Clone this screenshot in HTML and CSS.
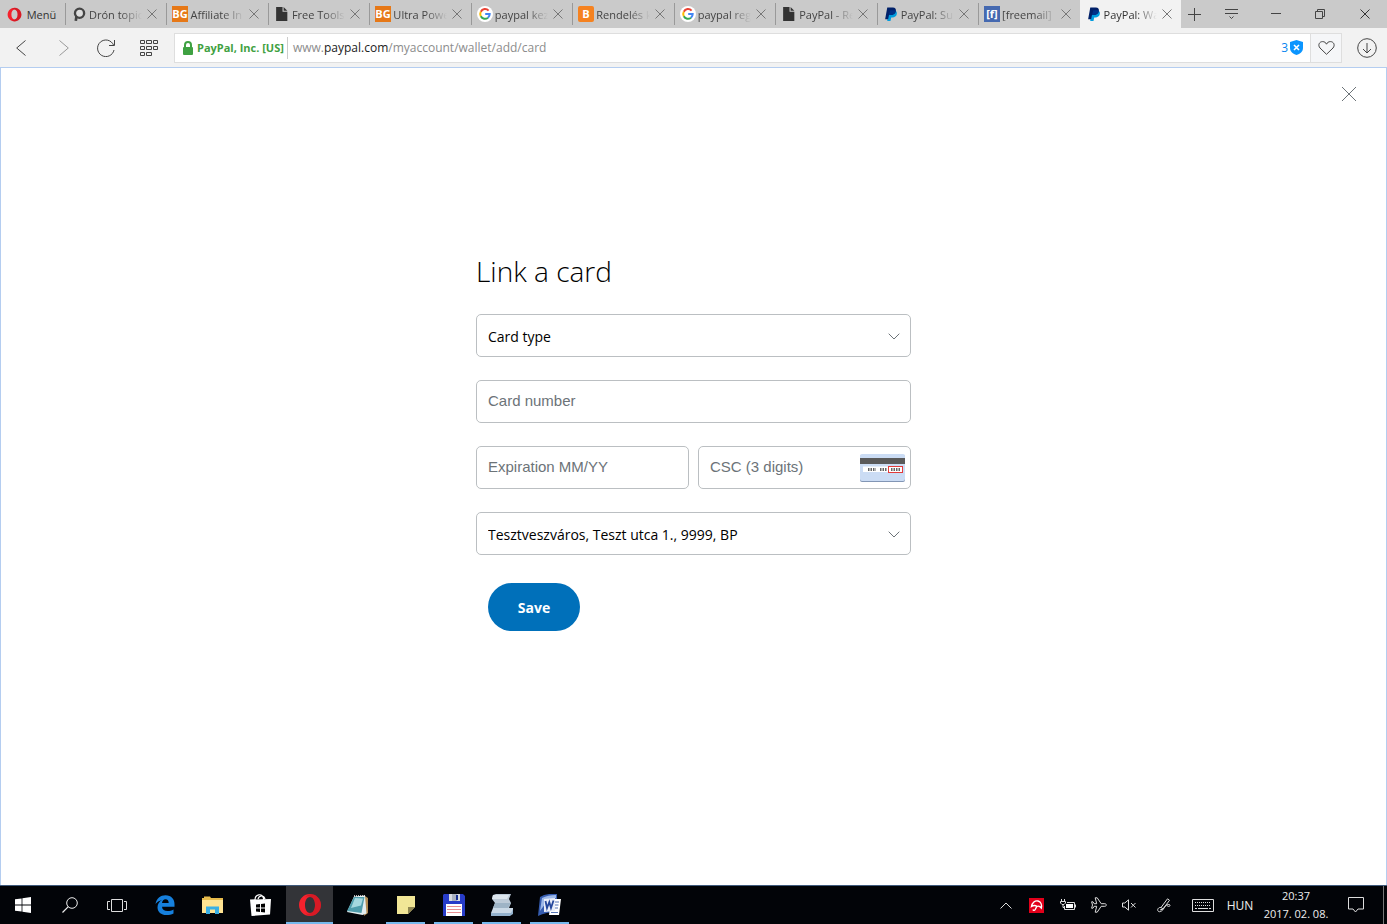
FILE: index.html
```html
<!DOCTYPE html>
<html lang="en">
<head>
  <meta charset="UTF-8">
  <meta name="viewport" content="width=device-width, initial-scale=1.0">
  <title>PayPal: Wallet</title>
  <link rel="stylesheet" href="styles.css">
</head>
<body>
  <!-- shared icons -->
  <svg class="sprite" aria-hidden="true">
    <symbol id="x" viewBox="0 0 10 10"><path d="M.5.5l9 9M9.500.5l-9 9" fill="none" stroke="currentColor"/></symbol>
    <symbol id="doc" viewBox="0 0 15 15"><path d="M2 1h6v4.500h4.500V14H2z" fill="#333"/><path d="M9 1l3.500 3.500H9z" fill="#333"/></symbol>
    <symbol id="google" viewBox="0 0 16 16"><circle cx="8" cy="8" r="8" fill="#fff"/><g fill="none" stroke-width="2"><path d="M11.600 4.600A4.800 4.800 0 0 0 3.800 5.700" stroke="#ea4335"/><path d="M3.800 5.700a4.800 4.800 0 0 0 0 4.600" stroke="#fbbc05"/><path d="M3.800 10.300a4.800 4.800 0 0 0 7.200 1.400" stroke="#34a853"/><path d="M11 11.700A4.800 4.800 0 0 0 12.700 8H8.200" stroke="#4285f4"/></g></symbol>
    <symbol id="paypal" viewBox="0 0 15 15"><path d="M5 4h6c2 .6 2.300 2.200 1.900 3.800-.5 2-2 2.900-4.100 2.900H7.700L7 14H4z" fill="#009cde"/><path d="M4 1.500h5.300c2.100 0 3.100 1.300 2.700 3.300C11.500 7.600 9.700 8.500 7.300 8.500H5.600L4.800 12.500H2z" fill="#012169"/><path d="M5.500 8.500h1.800c2.400 0 4.200-.9 4.700-3.700l.1-.5c-1-.5-3.500-.4-5.300-.4z" fill="#003087"/></symbol>
    <symbol id="opera" viewBox="0 0 24 24"><path fill-rule="evenodd" d="M12 1C5.900 1 1 5.900 1 12s4.900 11 11 11 11-4.900 11-11S18.100 1 12 1zm0 3c2.900 0 5 3.500 5 8s-2.100 8-5 8-5-3.500-5-8 2.100-8 5-8z" fill="#f5222d"/><path d="M15.500 1.600C20 3 23 7.200 23 12s-3 9-7.500 10.400C11.500 23.500 8.500 22 7 19.500c1.500 1.300 3.300 2 5 .5 2.900 0 5-3.500 5-8s-2.100-8-5-8c-1.700-1.500-3.500-.8-5 .5C8.500 2 11.500.5 15.500 1.600z" fill="#a90f19" opacity=".4"/></symbol>
  </svg>

  <header class="browser">
    <div class="tabbar">
      <button class="menu"><svg width="15" height="15"><use href="#opera"/></svg>Menü</button>
      <div class="tabs">
        <div class="tab"><svg class="fav" viewBox="0 0 15 15"><path d="M4.500 14l.6-4.500" stroke="#444" stroke-width="2.500"/><circle cx="8" cy="6.800" r="4.300" fill="#ddd" stroke="#444" stroke-width="2.200"/></svg><span class="title">Drón topic</span><button class="close" aria-label="Close tab"><svg><use href="#x"/></svg></button></div>
        <div class="tab"><svg class="fav" viewBox="0 0 16 16"><rect width="16" height="16" fill="#e67817"/><text class="fav-text" x="8" y="12">BG</text></svg><span class="title">Affiliate In</span><button class="close" aria-label="Close tab"><svg><use href="#x"/></svg></button></div>
        <div class="tab"><svg class="fav"><use href="#doc"/></svg><span class="title">Free Tools</span><button class="close" aria-label="Close tab"><svg><use href="#x"/></svg></button></div>
        <div class="tab"><svg class="fav" viewBox="0 0 16 16"><rect width="16" height="16" fill="#e67817"/><text class="fav-text" x="8" y="12">BG</text></svg><span class="title">Ultra Powe</span><button class="close" aria-label="Close tab"><svg><use href="#x"/></svg></button></div>
        <div class="tab"><svg class="fav"><use href="#google"/></svg><span class="title">paypal kez</span><button class="close" aria-label="Close tab"><svg><use href="#x"/></svg></button></div>
        <div class="tab"><svg class="fav" viewBox="0 0 16 16"><rect width="16" height="16" rx="2" fill="#f58220"/><text class="fav-text" x="8" y="12">B</text></svg><span class="title">Rendelés k</span><button class="close" aria-label="Close tab"><svg><use href="#x"/></svg></button></div>
        <div class="tab"><svg class="fav"><use href="#google"/></svg><span class="title">paypal reg</span><button class="close" aria-label="Close tab"><svg><use href="#x"/></svg></button></div>
        <div class="tab"><svg class="fav"><use href="#doc"/></svg><span class="title">PayPal - Re</span><button class="close" aria-label="Close tab"><svg><use href="#x"/></svg></button></div>
        <div class="tab"><svg class="fav"><use href="#paypal"/></svg><span class="title">PayPal: Su</span><button class="close" aria-label="Close tab"><svg><use href="#x"/></svg></button></div>
        <div class="tab"><svg class="fav" viewBox="0 0 16 16"><rect width="16" height="16" fill="#4569b0"/><text class="fav-text" x="8" y="12">[f]</text></svg><span class="title">[freemail]</span><button class="close" aria-label="Close tab"><svg><use href="#x"/></svg></button></div>
        <div class="tab active"><svg class="fav"><use href="#paypal"/></svg><span class="title">PayPal: Wa</span><button class="close" aria-label="Close tab"><svg><use href="#x"/></svg></button></div>
      </div>
      <div class="window-buttons">
        <button class="small" aria-label="New tab"><svg width="13" height="13" viewBox="0 0 13 13"><path d="M0 6.500h13M6.500 0v13"/></svg></button>
        <button aria-label="Tab menu"><svg width="13" height="12" viewBox="0 0 13 12"><path d="M0 1.500h13M0 5.500h13M4.500 8.500l2 2 2-2"/></svg></button>
        <button aria-label="Minimize"><svg width="10" height="10" viewBox="0 0 10 10"><path d="M0 4.500h10"/></svg></button>
        <button aria-label="Restore"><svg width="10" height="10" viewBox="0 0 10 10"><path d="M.5 2.500h7v7h-7zM2.500 2.500v-2h7v7h-2"/></svg></button>
        <button aria-label="Close"><svg width="10" height="10"><use href="#x"/></svg></button>
      </div>
    </div>

    <div class="toolbar">
      <nav class="nav">
        <button aria-label="Back"><svg width="10" height="16" viewBox="0 0 10 16"><path d="M9.500.5L.7 8l8.800 7.500"/></svg></button>
        <button class="off" aria-label="Forward"><svg width="10" height="16" viewBox="0 0 10 16"><path d="M.5.5L9.300 8 .5 15.500"/></svg></button>
        <button aria-label="Reload"><svg width="18" height="18" viewBox="0 0 18 18"><path d="M17 11a8.300 8.300 0 1 1-.5-5M17.500 1v5.500H12"/></svg></button>
        <button aria-label="Speed dial"><svg width="18" height="16" viewBox="0 0 18 16"><path d="M.5.5h4v3h-4zM6.500.5h5v3h-5zM13.500.5h4v3h-4zM.5 6.500h4v3h-4zM6.500 6.500h5v3h-5zM13.500 6.500h4v3h-4zM.5 12.500h4v3h-4zM6.500 12.500h5v3h-5z"/></svg></button>
      </nav>
      <div class="address">
        <svg class="lock" width="10" height="14" viewBox="0 0 10 14"><rect y="6" width="10" height="8" rx="1" fill="#3fa142"/><path d="M2 7V4a3 3 0 0 1 6 0v3" fill="none" stroke="#3fa142" stroke-width="2"/></svg>
        <span class="owner">PayPal, Inc. [US]</span>
        <div class="url" role="textbox" contenteditable="true" spellcheck="false" aria-label="Address">www.<b>paypal.com</b>/myaccount/wallet/add/card</div>
        <button class="blocked">3<svg width="13" height="15" viewBox="0 0 13 15"><path d="M6.500 0L13 2v6c0 3.500-3 6-6.500 7C3 14 0 11.500 0 8V2z" fill="#0a95ff"/><path d="M4 5l5 5M9 5l-5 5" stroke="#fff" stroke-width="1.600"/></svg></button>
        <button class="heart" aria-label="Bookmark"><svg width="17" height="14" viewBox="0 0 17 14"><path d="M8.500 13.300L2 7C-.5 4 1.500.6 4.500.6c2 0 3.300 1 4 2.600.7-1.600 2-2.600 4-2.600 3 0 5 3.400 2.500 6.400z"/></svg></button>
      </div>
      <button class="download" aria-label="Downloads"><svg width="20" height="20" viewBox="0 0 20 20"><circle cx="10" cy="10" r="9.300"/><path d="M10 5v10M6 11l4 4 4-4"/></svg></button>
    </div>
  </header>

  <main class="page">
    <div class="page-top">
      <button class="page-close" aria-label="Close"><svg width="16" height="16" viewBox="0 0 16 16"><path d="M1 1l14 14M15 1L1 15" fill="none" stroke="#6c7378"/></svg></button>
    </div>
    <form class="card-form">
      <h1>Link a card</h1>
      <div class="field">
        <select aria-label="Card type"><option>Card type</option></select>
        <svg class="arrow" width="12" height="7" viewBox="0 0 12 7"><path d="M.7.7L6 6 11.300.7"/></svg>
      </div>
      <div class="field"><input type="text" placeholder="Card number" aria-label="Card number"></div>
      <div class="row">
        <div class="field"><input type="text" placeholder="Expiration MM/YY" aria-label="Expiration MM/YY"></div>
        <div class="field">
          <input type="text" placeholder="CSC (3 digits)" aria-label="CSC (3 digits)">
          <svg class="csc" width="45" height="28" viewBox="0 0 45 28"><rect y="1" width="45" height="27" rx="2" fill="#8296b5"/><rect width="45" height="27" rx="2" fill="#cbdcf4"/><path d="M0 4h45v6H0z" fill="#5a5a5a"/><path d="M3 12.500h26v5.500H3z" fill="#fff"/><rect x="28.500" y="12.500" width="14" height="6" fill="#fff" stroke="#e33b3b"/><path d="M8 15.500h8M20 15.500h7M31 15.500h9" stroke="#666" stroke-width="3" stroke-dasharray="1.500 1"/></svg>
        </div>
      </div>
      <div class="field">
        <select aria-label="Billing address"><option>Tesztveszváros, Teszt utca 1., 9999, BP</option></select>
        <svg class="arrow" width="12" height="7" viewBox="0 0 12 7"><path d="M.7.7L6 6 11.300.7"/></svg>
      </div>
      <button type="button" class="save">Save</button>
    </form>
  </main>

  <footer class="taskbar">
    <div class="apps">
      <button class="sys" aria-label="Start"><svg width="16" height="16" viewBox="0 0 16 16"><path d="M0 2.300L6.600 1.400v6.200H0zM7.400 1.300L16 0v7.600H7.400zM0 8.400h6.600v6.200L0 13.700zM7.400 8.400H16V16l-8.600-1.300z" fill="#fff"/></svg></button>
      <button class="sys" aria-label="Search"><svg width="16" height="16" viewBox="0 0 16 16"><circle cx="10" cy="6" r="5.300" fill="none" stroke="#eee"/><path d="M6.300 9.700L.5 15.500" stroke="#eee" stroke-width="1.200"/></svg></button>
      <button class="sys" aria-label="Task view"><svg width="20" height="13" viewBox="0 0 20 13"><path d="M4.500.5h11v12h-11zM3 2.500H.5v8H3M17 2.500h2.500v8H17" fill="none" stroke="#ddd"/></svg></button>
      <button aria-label="Edge"><svg width="20" height="20" viewBox="0 0 20 20"><path d="M.5 9C1.500 3.200 5.500.3 10.500.3c6 0 9 4.200 9 9v2.400H7c.2 3 2.500 4.300 5.500 4.300 2.300 0 4.300-.6 6-1.600v4c-2 1.100-4.500 1.600-7 1.600-5.500 0-9-3-9-7.800 0-3.400 1.800-5.800 4.500-7C4 5.800 2 7 .5 9zM7 8h6.700c0-2.300-1-3.700-3.200-3.700C8.600 4.300 7.300 5.800 7 8z" fill="#1680dd"/></svg></button>
      <button aria-label="File Explorer"><svg width="21" height="18" viewBox="0 0 21 18"><path d="M0 2h2V.5h6L9 2h12v15H0z" fill="#e8bc4c"/><path d="M0 4h21v13H0z" fill="#ffe493"/><path d="M4 18v-7.500h13V18h-4v-4.500H8V18z" fill="#3bb0e5"/></svg></button>
      <button aria-label="Store"><svg width="21" height="22" viewBox="0 0 21 22"><path d="M5 6c0-6 7-7 8.500-2V6M8 5c1-4 6-4 7 0" fill="none" stroke="#fff" stroke-width="1.200"/><path d="M0 5.500l21-.5-1 15.500L1.500 22z" fill="#fff"/><path d="M6 10.500l4-.5v3.500H6zM11 10l4-.5v4h-4zM6 14.500h4V18l-4-.5zM11 14.500h4v4l-4-.5z" fill="#000"/></svg></button>
      <button class="running current" aria-label="Opera"><svg width="24" height="24"><use href="#opera"/></svg></button>
      <button aria-label="Notepad"><svg width="22" height="22" viewBox="0 0 22 22"><path d="M18 2l3 2v15l-4 3z" fill="#b28b51"/><path d="M7 2.500L18 1.500l1.500 18-4 1.500L0 18z" fill="#e3eef0"/><path d="M7 3l10.500 0L14.500 19 0 17z" fill="#4f9dac"/><path d="M8 4l8 .5-2 7L4 14z" fill="#a5d8df"/><path d="M7 2h11" stroke="#eee" stroke-width="1.500" stroke-dasharray="1 1"/></svg></button>
      <button class="running" aria-label="Sticky Notes"><svg width="18" height="18" viewBox="0 0 18 18"><path d="M0 0h18v11l-7 7H0z" fill="#f1e696"/><path d="M11 18v-7h7z" fill="#8f8650"/></svg></button>
      <button class="running" aria-label="Total Commander"><svg width="22" height="22" viewBox="0 0 22 22"><path d="M1 0h19l2 2v20H0V1z" fill="#273cc8"/><path d="M6 0h11v7H6z" fill="#d6dae1"/><path d="M9 0h5v7H9z" fill="#aab0bf"/><path d="M13 1h2v5h-2z" fill="#173092"/><path d="M3 10h16v12H3z" fill="#fff"/><path d="M4 12.500h14M4 15.500h14M4 18.500h14" stroke="#e88e91"/></svg></button>
      <button class="running" aria-label="Documents"><svg width="24" height="22" viewBox="0 0 24 22"><path d="M3 1l3-1h15l-2 5 2 4-2 5H3l2-5-3-4z" fill="#bccad7"/><path d="M3 1h16l-2 4H2z" fill="#dce6ee"/><path d="M5 9l-2 5h15l3-5z" fill="#9eb4c6"/><path d="M3 14h20v6H9v2H1v-3z" fill="#cad9e6"/><path d="M1 19h20l2-4v5l-3 2H1z" fill="#93b1cc"/></svg></button>
      <button class="running" aria-label="Word"><svg width="23" height="22" viewBox="0 0 23 22"><path d="M2 3q6-4 17-3v18Q8 18 0 22z" fill="#365db0"/><path d="M4 4q6-3 14-3v3Q9 6 2 17z" fill="#9eb9e8"/><path d="M13 5h10l-2 16H11z" fill="#fff"/><path d="M6 5l11-1v13L6 18z" fill="#e9eef9"/><path d="M7.500 7l1.500 7 2.300-6 1.700 6 2.500-7.500" fill="none" stroke="#25489c" stroke-width="1.800"/><path d="M17 8h4M17 11h3.500M17 14h3M13 18.500h7" stroke="#5575b6"/></svg></button>
    </div>
    <div class="tray">
      <button aria-label="Show hidden icons"><svg width="12" height="7" viewBox="0 0 12 7"><path d="M.5 6.500L6 1l5.500 5.500" fill="none" stroke="#ddd"/></svg></button>
      <button aria-label="Avira"><svg width="15" height="15" viewBox="0 0 15 15"><rect width="15" height="15" fill="#e2001a"/><path d="M2.500 8.500C3.200 4.500 6 2.300 9 3c2.800.7 4 3.800 3.300 7-1.300-1.700-2.800-2.300-4.300-1.500-1.500-1.300-3.500-1.300-5.500 0z" fill="none" stroke="#fff" stroke-width="1.400"/><path d="M7.800 8.500L6.200 11.500c-.7 1.200-2 1-2.200 0" fill="none" stroke="#fff" stroke-width="1.400"/></svg></button>
      <button aria-label="Battery"><svg width="16" height="12" viewBox="0 0 16 12"><path d="M1.500 0v2M4.500 0v2M.5 2.500h5v1.500l-1.500 1.500h-2L.5 4zM3 5.500v3h2" fill="none" stroke="#ddd"/><path d="M7 3.500h7.500v7h-10V7" fill="none" stroke="#ddd"/><path d="M6 5h7v4H6z" fill="#fff"/><path d="M15.500 5.500v3" stroke="#ddd"/></svg></button>
      <button aria-label="Airplane mode"><svg width="16" height="16" viewBox="0 0 16 16"><path d="M5.700 6.700L4.200.8h2l4 5.900h3.600c2 0 2 2.600 0 2.600h-3.600l-4 5.900h-2l1.500-5.900H3.200L2 11.200H.6L1.500 8 .6 4.800H2l1.200 1.900z" fill="none" stroke="#ddd"/></svg></button>
      <button aria-label="Volume"><svg width="15" height="12" viewBox="0 0 15 12"><path d="M.5 4h2.300L6.500.8v10.400L2.800 8H.5zM9 4l4.500 4.500M13.500 4L9 8.500" fill="none" stroke="#ddd"/></svg></button>
      <button class="ink" aria-label="Windows Ink"><svg width="14" height="15" viewBox="0 0 14 15"><path d="M4 9.500L10.500.8l2 1.500L6 11zM4 9.500c-2.500-.5-4 2-3 3.500 1.500 2 5-.5 6-3 1-2.700 5-4.500 6-3 .5 1.500-2 2-3 .5M3 12l3-1" fill="none" stroke="#ddd"/></svg></button>
      <button class="keyboard" aria-label="Touch keyboard"><svg width="22" height="13" viewBox="0 0 22 13"><path d="M.5.5h21v12H.5z" fill="none" stroke="#ddd"/><path d="M3 3.500h16M3 6.500h16" stroke="#ddd" stroke-dasharray="1 1"/><path d="M3 9.500h2M6 9.500h10M17 9.500h2" stroke="#ddd"/></svg></button>
      <button class="lang">HUN</button>
      <button class="clock"><span>20:37</span><span>2017. 02. 08.</span></button>
      <button class="notes" aria-label="Notifications"><svg width="16" height="16" viewBox="0 0 16 16"><path d="M.5.5h15v11.500h-5.500l-2.500 3-2.500-3H.5z" fill="none" stroke="#ddd"/></svg></button>
      <button class="desktop" aria-label="Show desktop"></button>
    </div>
  </footer>
</body>
</html>
```
FILE: styles.css
```css
* {
  margin: 0;
  padding: 0;
  box-sizing: border-box;
}

body {
  font-family: "Open Sans", "Noto Sans", sans-serif;
  font-size: 12px;
  min-height: 100vh;
  display: flex;
  flex-direction: column;
  background: #fff;
}

button {
  font: inherit;
  color: inherit;
  border: none;
  background: none;
  display: flex;
  align-items: center;
  justify-content: center;
  cursor: pointer;
}

svg {
  display: block;
  flex-shrink: 0;
}

.sprite {
  position: absolute;
  width: 0;
  height: 0;
}

/* browser */
.tabbar {
  display: flex;
  height: 28px;
  background: #cacaca;
  font-size: 11px;
  color: #444;
}

.menu {
  width: 65px;
  gap: 5px;
  padding-right: 2px;
  color: #333;
}

.tabs {
  flex: 1;
  display: flex;
  min-width: 0;
}

.tab {
  flex: 1;
  min-width: 0;
  display: flex;
  align-items: center;
  padding: 0 4px 0 6px;
  background: linear-gradient(#999, #999) no-repeat 0 3px / 1px 22px;
}

.tab.active {
  background: #f2f2f2;
  color: #333;
}

.fav {
  width: 16px;
  height: 16px;
  margin-right: 2px;
}

.fav-text {
  font-size: 11px;
  font-weight: 700;
  text-anchor: middle;
  fill: #fff;
}

.title {
  flex: 1;
  overflow: hidden;
  white-space: nowrap;
  -webkit-mask-image: linear-gradient(to right, #000 60%, transparent);
  mask-image: linear-gradient(to right, #000 60%, transparent);
}

.close {
  width: 20px;
  height: 20px;
  color: #777;
}

.close svg {
  width: 10px;
  height: 10px;
}

.window-buttons {
  display: flex;
  width: 206px;
  color: #333;
}

.window-buttons button {
  width: 45px;
}

.window-buttons .small {
  width: 28px;
}

.window-buttons svg,
.nav svg,
.heart svg,
.download svg {
  fill: none;
  stroke: #444;
}

.toolbar {
  display: flex;
  align-items: center;
  height: 39px;
  background: #f2f2f2;
}

.nav {
  display: flex;
  width: 174px;
  padding-right: 4px;
}

.nav button {
  flex: 1;
  height: 30px;
}

.nav .off svg {
  stroke: #999;
}

.address {
  flex: 1;
  display: flex;
  align-items: center;
  height: 30px;
  padding-left: 8px;
  background: #fff;
  border: 1px solid #dedede;
}

.owner {
  margin-left: 4px;
  padding-right: 3px;
  border-right: 1px solid #ccc;
  line-height: 22px;
  font-size: 11px;
  font-weight: 700;
  color: #3fa142;
}

.url {
  flex: 1;
  padding-left: 5px;
  color: #8c8c8c;
  outline: none;
}

.url b {
  font-weight: 400;
  color: #222;
}

.blocked {
  gap: 2px;
  margin-right: 7px;
  color: #0a85ef;
}

.heart {
  width: 31px;
  height: 28px;
  background: #f5f6f8;
  border-left: 1px solid #dedede;
}

.download {
  width: 45px;
  height: 30px;
  padding-left: 4px;
}

/* page */
.page {
  flex: 1;
  border: 1px solid #b4cdf0;
  border-bottom: none;
  padding-bottom: 40px;
}

.page-top {
  display: flex;
  justify-content: flex-end;
  padding: 12px 23px;
}

.page-close {
  width: 28px;
  height: 28px;
}

.card-form {
  width: 100%;
  max-width: 435px;
  margin: 0 auto;
  padding-top: 131px;
}

.card-form h1 {
  font-size: 28px;
  line-height: 40px;
  font-weight: 300;
  color: #000;
  margin-bottom: 23px;
}

.field {
  position: relative;
  flex: 1;
  margin-bottom: 23px;
}

.row {
  display: flex;
  gap: 9px;
}

.field input,
.field select {
  display: block;
  width: 100%;
  height: 43px;
  border: 1px solid #bbbfc2;
  border-radius: 5px;
  background: #fff;
  color: #000;
}

.field input {
  padding: 0 11px 2px;
  font: 15px "Liberation Sans", Arial, sans-serif;
}

.field input::placeholder {
  color: #6c7378;
}

.field select {
  appearance: none;
  padding: 2px 11px 0;
  font: 14px "Open Sans", "Noto Sans", sans-serif;
}

.arrow {
  position: absolute;
  right: 11px;
  top: 19px;
  fill: none;
  stroke: #6c7378;
  pointer-events: none;
}

.csc {
  position: absolute;
  right: 6px;
  top: 8px;
}

.save {
  width: 92px;
  height: 48px;
  margin: 28px 0 0 12px;
  border-radius: 24px;
  background: #0070ba;
  color: #fff;
  font-size: 14px;
  font-weight: 700;
}

/* taskbar */
.taskbar {
  display: flex;
  justify-content: space-between;
  height: 39px;
  background: #020408;
  border-top: 1px solid #3f5a7c;
  color: #eee;
}

.apps,
.tray {
  display: flex;
}

.apps {
  gap: 1px;
}

.apps button {
  width: 47px;
}

.apps .sys {
  width: 46px;
}

.running {
  background: linear-gradient(#76b9ed, #76b9ed) no-repeat center bottom / 39px 2px;
}

.apps .current {
  margin-left: 1px;
  background: linear-gradient(#76b9ed, #76b9ed) no-repeat center bottom / 47px 2px #333438;
}

.tray button {
  width: 31px;
}

.tray .ink {
  width: 44px;
  padding-right: 6px;
}

.tray .keyboard {
  width: 28px;
}

.tray .lang {
  width: 46px;
}

.tray .clock {
  width: 66px;
  flex-direction: column;
  font-size: 11px;
  line-height: 18px;
  white-space: nowrap;
}

.tray .notes {
  width: 54px;
}

.tray .desktop {
  width: 4px;
  border-left: 1px solid #777;
}
```
